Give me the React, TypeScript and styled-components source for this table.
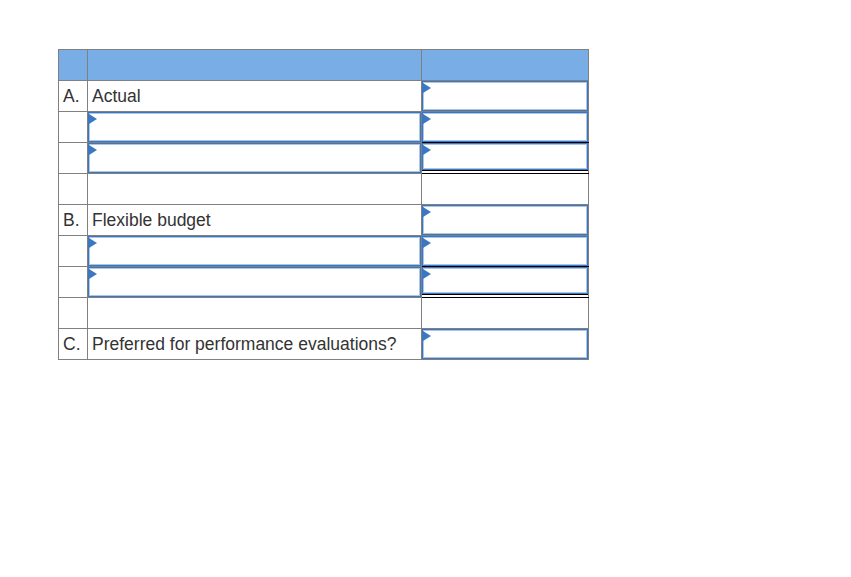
import styled, { createGlobalStyle } from 'styled-components'

const GlobalStyle = createGlobalStyle`
  body {
    margin: 0;
    background: #ffffff;
    font-family: "Liberation Sans", Arial, sans-serif;
  }
`

const Page = styled.div`
  padding: 49px 0 0 58px;
`

const Grid = styled.table`
  border-collapse: collapse;
  table-layout: fixed;
  width: 530px;
  font-size: 17.5px;
  color: #333333;
`

const Cell = styled.td<{ $rule?: 'single' | 'double' }>`
  border: 1px solid #808080;
  height: 30px;
  padding: 0;
  vertical-align: middle;
  ${(p) => p.$rule && 'border-bottom-color: #000000;'}
`

const HeadCell = styled(Cell)`
  background: #79ade6;
`

const Label = styled.span`
  display: block;
  padding-left: 4px;
  line-height: 30px;
  white-space: nowrap;
`

const Stack = styled.div`
  display: flex;
  flex-direction: column;
  height: 30px;
`

const EntryBox = styled.div`
  position: relative;
  flex: 1;
  box-sizing: border-box;
  border: 1px solid #3f76bb;
  box-shadow: inset 0 0 0 1px #a9c7ea;
  background: #ffffff;
`

const Marker = styled.span`
  position: absolute;
  top: 1px;
  left: 0;
  width: 0;
  height: 0;
  border-top: 5px solid transparent;
  border-bottom: 5px solid transparent;
  border-left: 8px solid #3a78c4;
`

const TotalRule = styled.div`
  height: 1px;
  margin-bottom: 2px;
  background: #000000;
`

const Entry = ({ rule }: { rule?: 'single' | 'double' }) => (
  <Stack>
    <EntryBox>
      <Marker />
    </EntryBox>
    {rule === 'double' && <TotalRule />}
  </Stack>
)

type Row =
  | { kind: 'label'; letter: string; text: string }
  | { kind: 'entry'; rule?: 'single' | 'double' }
  | { kind: 'blank' }

const rows: Row[] = [
  { kind: 'label', letter: 'A.', text: 'Actual' },
  { kind: 'entry', rule: 'single' },
  { kind: 'entry', rule: 'double' },
  { kind: 'blank' },
  { kind: 'label', letter: 'B.', text: 'Flexible budget' },
  { kind: 'entry', rule: 'single' },
  { kind: 'entry', rule: 'double' },
  { kind: 'blank' },
  { kind: 'label', letter: 'C.', text: 'Preferred for performance evaluations?' },
]

export default function App() {
  return (
    <>
      <GlobalStyle />
      <Page>
        <Grid>
          <colgroup>
            <col style={{ width: 29 }} />
            <col style={{ width: 334 }} />
            <col style={{ width: 167 }} />
          </colgroup>
          <tbody>
            <tr>
              <HeadCell />
              <HeadCell />
              <HeadCell />
            </tr>
            {rows.map((row, i) => {
              if (row.kind === 'label') {
                return (
                  <tr key={i}>
                    <Cell><Label>{row.letter}</Label></Cell>
                    <Cell><Label>{row.text}</Label></Cell>
                    <Cell><Entry /></Cell>
                  </tr>
                )
              }
              if (row.kind === 'entry') {
                return (
                  <tr key={i}>
                    <Cell />
                    <Cell><Entry /></Cell>
                    <Cell $rule={row.rule}><Entry rule={row.rule} /></Cell>
                  </tr>
                )
              }
              return (
                <tr key={i}>
                  <Cell />
                  <Cell />
                  <Cell />
                </tr>
              )
            })}
          </tbody>
        </Grid>
      </Page>
    </>
  )
}
